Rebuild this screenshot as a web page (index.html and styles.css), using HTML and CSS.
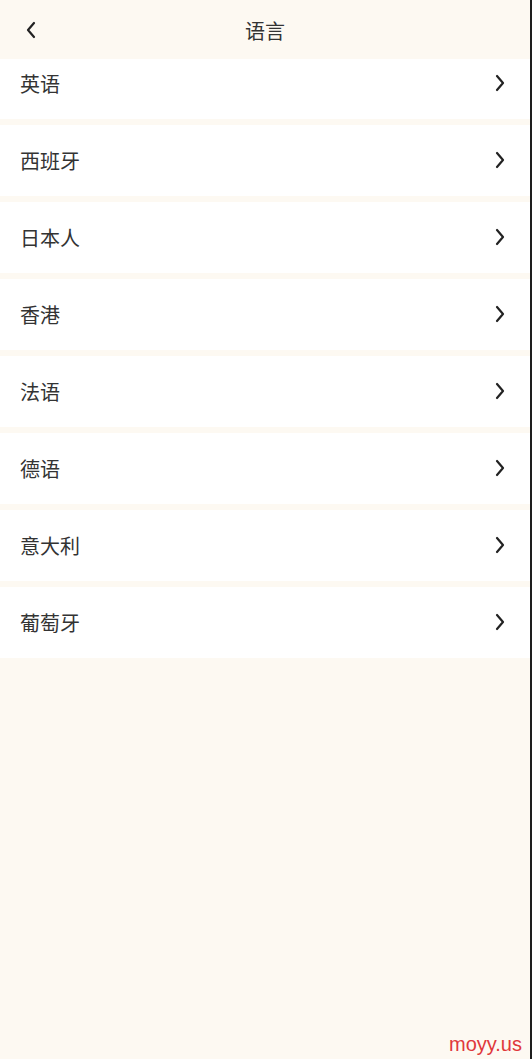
FILE: index.html
```html
<!DOCTYPE html>
<html lang="zh-CN">
<head>
  <meta charset="UTF-8" />
  <meta name="viewport" content="width=device-width, initial-scale=1.0"/>
  <title>语言</title>
  <link rel="stylesheet" href="styles.css">
</head>
<body>
  <div class="page">
    <header class="nav-bar">
      <span class="back">
        <svg width="12" height="18" viewBox="0 0 12 18"><polyline points="9,2 3,9 9,16" fill="none" stroke="#222" stroke-width="2.2" stroke-linecap="round" stroke-linejoin="round"/></svg>
      </span>
      <h1>语言</h1>
    </header>

    <ul class="lang-list">
      <li class="lang-item"><span>英语</span><svg class="arrow" width="12" height="18" viewBox="0 0 12 18"><polyline points="3,2 9,9 3,16"/></svg></li>
      <li class="lang-item"><span>西班牙</span><svg class="arrow" width="12" height="18" viewBox="0 0 12 18"><polyline points="3,2 9,9 3,16"/></svg></li>
      <li class="lang-item"><span>日本人</span><svg class="arrow" width="12" height="18" viewBox="0 0 12 18"><polyline points="3,2 9,9 3,16"/></svg></li>
      <li class="lang-item"><span>香港</span><svg class="arrow" width="12" height="18" viewBox="0 0 12 18"><polyline points="3,2 9,9 3,16"/></svg></li>
      <li class="lang-item"><span>法语</span><svg class="arrow" width="12" height="18" viewBox="0 0 12 18"><polyline points="3,2 9,9 3,16"/></svg></li>
      <li class="lang-item"><span>德语</span><svg class="arrow" width="12" height="18" viewBox="0 0 12 18"><polyline points="3,2 9,9 3,16"/></svg></li>
      <li class="lang-item"><span>意大利</span><svg class="arrow" width="12" height="18" viewBox="0 0 12 18"><polyline points="3,2 9,9 3,16"/></svg></li>
      <li class="lang-item"><span>葡萄牙</span><svg class="arrow" width="12" height="18" viewBox="0 0 12 18"><polyline points="3,2 9,9 3,16"/></svg></li>
    </ul>

    <div class="watermark">moyy.us</div>
  </div>
</body>
</html>
```

FILE: styles.css
```css
html, body {
  margin: 0;
  padding: 0;
  height: 100%;
}

body {
  font-family: "Noto Sans CJK SC", "Noto Sans", sans-serif;
  background-color: #1e1e1e;
}

.page {
  position: relative;
  width: 530px;
  height: 1059px;
  background-color: #fdf9f2;
  overflow: hidden;
}

.nav-bar {
  position: absolute;
  top: 0;
  left: 0;
  right: 0;
  height: 59px;
  display: flex;
  align-items: center;
  justify-content: center;
  background-color: #fdf9f2;
  z-index: 2;
}

.nav-bar h1 {
  margin: 0;
  font-size: 20px;
  font-weight: normal;
  color: #333;
  line-height: 1;
  padding-top: 2px;
}

.back {
  position: absolute;
  left: 25px;
  top: 21px;
  display: flex;
}

.lang-list {
  list-style: none;
  margin: 48px 0 0;
  padding: 0;
  display: flex;
  flex-direction: column;
  gap: 6px;
}

.lang-item {
  height: 71px;
  display: flex;
  align-items: center;
  justify-content: space-between;
  padding: 0 24px 0 20px;
  background-color: #fff;
  font-size: 20px;
  color: #333;
}

.lang-item span {
  line-height: 1;
}

.arrow {
  margin-top: -2px;
}

.arrow polyline {
  fill: none;
  stroke: #222;
  stroke-width: 2.2;
  stroke-linecap: round;
  stroke-linejoin: round;
}

.watermark {
  position: absolute;
  right: 8px;
  bottom: 3px;
  font-family: "Liberation Sans", Arial, sans-serif;
  font-size: 20px;
  color: #e0383b;
}
```
